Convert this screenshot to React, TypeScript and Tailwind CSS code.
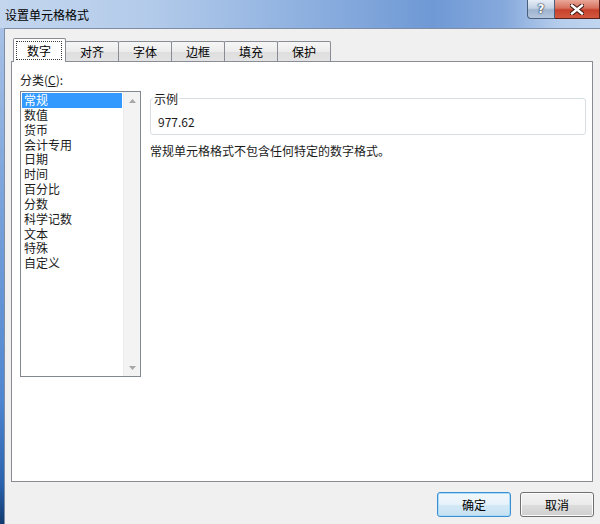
import React from "react";

const items = ["常规", "数值", "货币", "会计专用", "日期", "时间", "百分比", "分数", "科学记数", "文本", "特殊", "自定义"];
const tabs = ["对齐", "字体", "边框", "填充", "保护"];

function Arrow({ down }: { down?: boolean }) {
  return (
    <svg width="7" height="4" viewBox="0 0 7 4">
      {down ? <path d="M0 0 H7 L3.5 4 Z" fill="#a7a7a7" /> : <path d="M0 4 H7 L3.5 0 Z" fill="#a7a7a7" />}
    </svg>
  );
}

export default function App() {
  return (
    <div className="w-[600px] h-[524px] overflow-hidden flex flex-col font-['Noto_Sans_CJK_SC',sans-serif] text-[12px] text-[#1b1b1b]">
      {/* title bar */}
      <div className="h-[28px] shrink-0 flex items-start bg-[linear-gradient(to_right,#c3d6ee_0%,#b3cbea_25%,#8fb1e0_50%,#6f99d5_72%,#86a9dc_84%,#b5cdec_93%,#c0d5ef_100%)]">
        <div className="pl-[5px] pt-[7px] leading-[16px] text-[12px] text-black">设置单元格格式</div>
        <div className="ml-auto flex">
          <div className="w-[28px] h-[19px] flex items-center justify-center rounded-bl-[4px] border border-t-0 border-[#4a5f7e] bg-[linear-gradient(to_bottom,#e6edf6_0%,#c4d2e4_45%,#9fb3cf_55%,#b4c6dd_100%)]">
            <span className="font-['DejaVu_Sans',sans-serif] font-bold text-[12px] leading-[12px] text-white [text-shadow:0_0_1px_#2a3b55,0_0_1px_#2a3b55,0_0_2px_#2a3b55]">?</span>
          </div>
          <div className="w-[45px] h-[19px] flex items-center justify-center border border-t-0 border-l-0 border-[#5a1f18] bg-[linear-gradient(to_bottom,#e9a898_0%,#d7705e_45%,#c7412c_55%,#d2583f_100%)]">
            <svg width="14" height="11" viewBox="0 0 14 11">
              <path d="M2 1.5 L12 9.5 M12 1.5 L2 9.5" stroke="#3b1510" strokeWidth="4.4" strokeLinecap="square" />
              <path d="M2 1.5 L12 9.5 M12 1.5 L2 9.5" stroke="#ffffff" strokeWidth="2.4" strokeLinecap="square" />
            </svg>
          </div>
        </div>
      </div>

      <div className="flex-1 flex min-h-0">
        <div className="w-[4px] shrink-0 bg-[linear-gradient(to_bottom,#a9c2e6_0%,#7ea6dc_30%,#4f86d0_75%,#2a62ad_92%,#123a6e_100%)]" />
        <div className="flex-1 flex flex-col border-l border-t border-[#7f8ea5] bg-[#f0f0f0] pl-[6px] pr-[7px] pt-[9px]">
          {/* tabs */}
          <div className="flex items-end h-[23px] ml-[2px]">
            <div className="relative z-10 w-[53px] h-[24px] -mb-px flex border border-b-0 border-[#898c95] bg-white rounded-t-[2px]">
              <div className="flex-1 mt-[2px] ml-[2px] mr-[3px] mb-[2px] border border-dotted border-[#3a3a3a] flex items-center justify-center leading-[15px] text-black">
                数字
              </div>
            </div>
            {tabs.map((t) => (
              <div
                key={t}
                className="w-[54px] h-[20px] -ml-px flex items-center justify-center border border-b-0 border-[#898c95] rounded-t-[2px] bg-[linear-gradient(to_bottom,#f6f6f6_0%,#ececec_50%,#dedede_51%,#e3e3e3_100%)] leading-[15px] text-black"
              >
                {t}
              </div>
            ))}
          </div>

          {/* panel */}
          <div className="h-[421px] border border-[#898c95] bg-white pl-[8px] pr-[6px] pt-[10px] flex flex-col">
            <div className="leading-[15px] mb-[4px]">
              分类(<span className="underline">C</span>):
            </div>
            <div className="flex gap-[9px]">
              <div className="w-[121px] h-[286px] shrink-0 border border-[#828790] bg-white flex">
                <div className="flex-1 pt-px px-px">
                  {items.map((it, i) => (
                    <div
                      key={it}
                      className={
                        i === 0
                          ? "h-[14.85px] leading-[14.85px] pl-[2px] bg-[#3399ff] text-white"
                          : "h-[14.85px] leading-[14.85px] pl-[2px]"
                      }
                    >
                      {it}
                    </div>
                  ))}
                </div>
                <div className="w-[17px] shrink-0 flex flex-col justify-between bg-[#f3f3f3] border-l border-[#ececec]">
                  <div className="h-[17px] flex items-center justify-center">
                    <Arrow />
                  </div>
                  <div className="h-[17px] flex items-center justify-center">
                    <Arrow down />
                  </div>
                </div>
              </div>

              <div className="flex-1 flex flex-col">
                <fieldset className="border border-[#d5dfe5] rounded-[3px]">
                  <legend className="ml-[2px] px-px leading-[15px] text-[#1b1b1b]">示例</legend>
                  <div className="pl-[7px] pt-[8px] pb-[5px] leading-[15px] text-[#1b1b1b]">977.62</div>
                </fieldset>
                <div className="mt-[8px] leading-[15px]">常规单元格格式不包含任何特定的数字格式。</div>
              </div>
            </div>
          </div>

          {/* buttons */}
          <div className="flex justify-end gap-[9px] mt-[10px] -mr-px">
            <button className="w-[74px] h-[25px] rounded-[3px] border border-[#3c8fd0] bg-[linear-gradient(to_bottom,#f2f8fc_0%,#e6f2fa_50%,#d4e9f6_51%,#c6e1f3_100%)] shadow-[inset_0_0_0_1px_#a8dcf7] leading-[15px] text-black">
              确定
            </button>
            <button className="w-[74px] h-[25px] rounded-[3px] border border-[#707070] bg-[linear-gradient(to_bottom,#f2f2f2_0%,#ebebeb_50%,#dddddd_51%,#cfcfcf_100%)] shadow-[inset_0_0_0_1px_#fcfcfc] leading-[15px] text-black">
              取消
            </button>
          </div>
        </div>
      </div>
    </div>
  );
}
